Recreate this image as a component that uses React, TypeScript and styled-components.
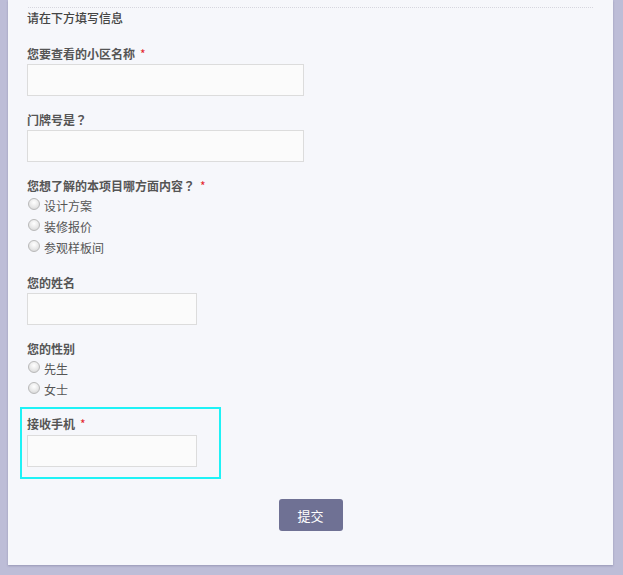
import React from "react";
import styled, { createGlobalStyle } from "styled-components";

const Global = createGlobalStyle`
  html, body {
    margin: 0;
    padding: 0;
    background: #bdbdd7;
  }
  body {
    font-family: "Noto Sans CJK SC", "Noto Sans", sans-serif;
  }
`;

const Page = styled.div`
  width: 623px;
  height: 575px;
  overflow: hidden;
  background: #bdbdd7;
`;

const Card = styled.div`
  margin-left: 8px;
  width: 605px;
  height: 565px;
  box-sizing: border-box;
  background: #f6f7fb;
  box-shadow: 0 1px 2px rgba(80, 80, 120, 0.35);
  padding: 7px 20px 0 19px;
  display: flex;
  flex-direction: column;
`;

const Divider = styled.div`
  border-top: 1px dotted #d6d6de;
  margin-left: 1px;
`;

const Title = styled.div`
  margin-top: 2px;
  font-size: 12px;
  line-height: 16px;
  color: #444;
  font-weight: 500;
`;

const Fields = styled.div`
  margin-top: 20px;
  display: flex;
  flex-direction: column;
`;

const Field = styled.div<{ $gap?: number; $focused?: boolean }>`
  display: flex;
  flex-direction: column;
  margin-bottom: ${(p) => p.$gap ?? 16}px;
  ${(p) =>
    p.$focused
      ? `
    margin-left: -7px;
    width: 187px;
    border: 2px solid #1ef2f6;
    padding: 7px 5px 10px 5px;
  `
      : ""}
`;

const Label = styled.div<{ $mb?: number }>`
  font-size: 12px;
  line-height: 16px;
  height: 16px;
  color: #555;
  font-weight: 700;
  margin-bottom: ${(p) => p.$mb ?? 2}px;
  white-space: nowrap;
`;

const Q = styled.span`
  font-family: "Noto Sans CJK TC", "Noto Sans CJK SC", sans-serif;
`;

const Req = styled.span`
  color: #e4262c;
  margin-left: 5px;
  font-weight: 400;
`;

const Input = styled.div<{ $w: number }>`
  width: ${(p) => p.$w}px;
  height: 32px;
  box-sizing: border-box;
  background: #fbfbfb;
  border: 1px solid #dcdcdc;
`;

const RadioRow = styled.label`
  display: flex;
  align-items: center;
  height: 21px;
  font-size: 12px;
  color: #555;
  margin-left: 1px;
`;

const RadioDot = styled.span`
  width: 12px;
  height: 12px;
  box-sizing: border-box;
  border-radius: 50%;
  border: 1px solid #b9b9b9;
  background: radial-gradient(circle at 50% 35%, #ffffff 0%, #e8e8e8 55%, #cfcfcf 100%);
  margin-right: 4px;
  margin-top: -3px;
`;

const ButtonRow = styled.div`
  display: flex;
  justify-content: center;
  margin-top: 20px;
`;

const Submit = styled.button`
  width: 64px;
  height: 32px;
  border: none;
  border-radius: 3px;
  background: #6f7194;
  color: #fff;
  font-family: "Noto Sans CJK SC", sans-serif;
  font-size: 13px;
  padding: 0;
  margin-left: 1px;
`;

const Radio = ({ text }: { text: string }) => (
  <RadioRow>
    <RadioDot />
    {text}
  </RadioRow>
);

export default function App() {
  return (
    <Page>
      <Global />
      <Card>
        <Divider />
        <Title>请在下方填写信息</Title>
        <Fields>
          <Field>
            <Label>
              您要查看的小区名称<Req>*</Req>
            </Label>
            <Input $w={277} />
          </Field>
          <Field>
            <Label>
              门牌号是<Q>？</Q>
            </Label>
            <Input $w={277} />
          </Field>
          <Field $gap={17}>
            <Label $mb={1}>
              您想了解的本项目哪方面内容<Q>？</Q>
              <Req>*</Req>
            </Label>
            <Radio text="设计方案" />
            <Radio text="装修报价" />
            <Radio text="参观样板间" />
          </Field>
          <Field>
            <Label>您的姓名</Label>
            <Input $w={170} />
          </Field>
          <Field $gap={7}>
            <Label $mb={1}>您的性别</Label>
            <Radio text="先生" />
            <Radio text="女士" />
          </Field>
          <Field $gap={0} $focused>
            <Label $mb={3}>
              接收手机<Req>*</Req>
            </Label>
            <Input $w={170} />
          </Field>
        </Fields>
        <ButtonRow>
          <Submit>提交</Submit>
        </ButtonRow>
      </Card>
    </Page>
  );
}
